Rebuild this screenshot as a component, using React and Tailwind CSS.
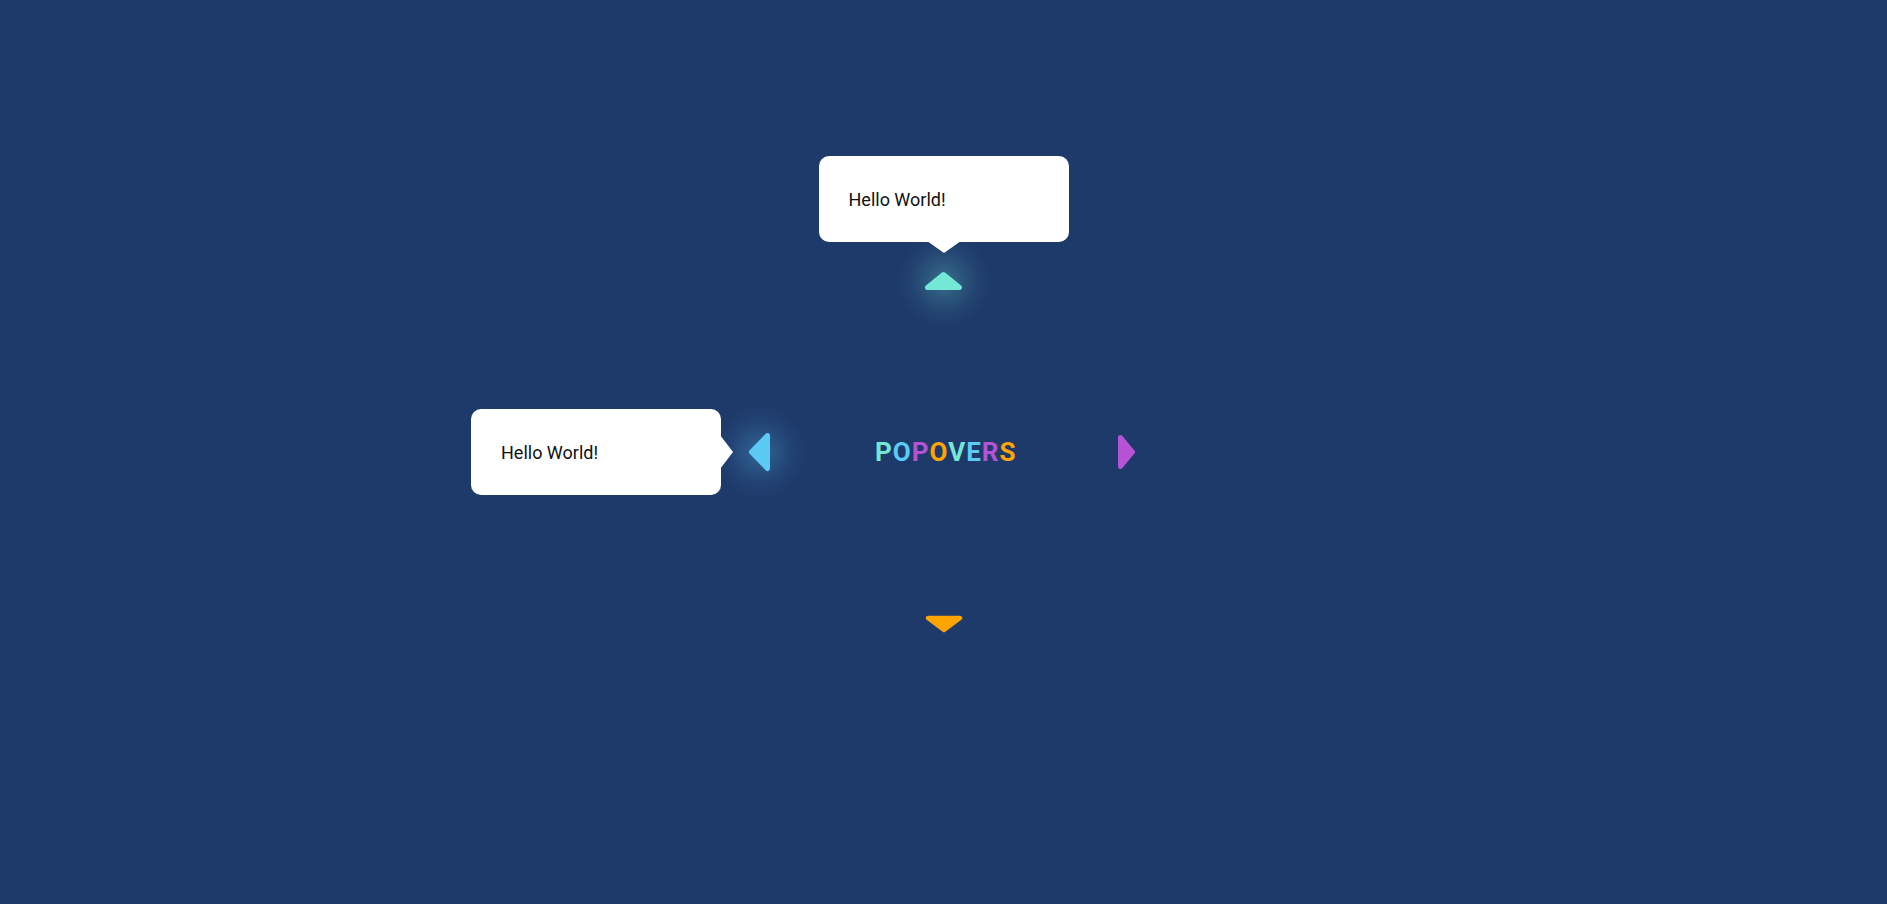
import React from 'react';

const font = { fontFamily: 'Roboto, "Liberation Sans", sans-serif' };

const letters = [
    ['P', 'text-[#74e8d4]'],
    ['O', 'text-[#5ccbf4]'],
    ['P', 'text-[#b553d4]'],
    ['O', 'text-[#ffa502]'],
    ['V', 'text-[#74e8d4]'],
    ['E', 'text-[#5ccbf4]'],
    ['R', 'text-[#b553d4]'],
    ['S', 'text-[#ffa502]'],
];

function Glow({ className }) {
    return (
        <div
            className={`pointer-events-none absolute left-1/2 top-1/2 h-[100px] w-[100px] -translate-x-1/2 -translate-y-1/2 rounded-full ${className}`}
        />
    );
}

function Popover({ side }) {
    // side = where the popover sits relative to its trigger
    if (side === 'top') {
        return (
            <div className="absolute bottom-[calc(100%+18px)] left-1/2 flex -translate-x-1/2 flex-col items-center">
                <div className="flex h-[86px] w-[250px] items-center rounded-[10px] bg-white pl-[30px] text-[18px] text-[#111]">
                    Hello World!
                </div>
                <svg width="34" height="12" viewBox="0 0 34 12" className="-mt-px">
                    <polygon points="0,0 34,0 17,12" fill="#fff" />
                </svg>
            </div>
        );
    }
    return (
        <div className="absolute right-[calc(100%+15px)] top-1/2 flex -translate-y-1/2 items-center">
            <div className="flex h-[86px] w-[250px] items-center rounded-[10px] bg-white pl-[30px] text-[18px] text-[#111]">
                Hello World!
            </div>
            <svg width="13" height="34" viewBox="0 0 13 34" className="-ml-px">
                <polygon points="0,0 13,17 0,34" fill="#fff" />
            </svg>
        </div>
    );
}

export default function App() {
    return (
        <div className="flex h-screen w-full items-center justify-center bg-[#1e3a6b]" style={font}>
            <div className="flex flex-col items-center">
                {/* Top trigger */}
                <div className="relative mb-[141px]">
                    <Glow className="bg-[radial-gradient(circle,rgba(116,232,212,0.3)_0%,rgba(116,232,212,0.16)_25%,rgba(116,232,212,0.06)_45%,rgba(116,232,212,0)_65%)]" />
                    <svg width="41" height="20" viewBox="0 0 41 20" className="relative block">
                        <polygon
                            points="4.5,16.5 20.5,3.5 36.5,16.5"
                            fill="#74e8d4"
                            stroke="#74e8d4"
                            strokeWidth="5"
                            strokeLinejoin="round"
                        />
                    </svg>
                    <Popover side="top" />
                </div>

                <div className="mb-[143px] mr-[3px] flex items-center">
                    {/* Left trigger */}
                    <div className="relative mr-[104px]">
                        <Glow className="bg-[radial-gradient(circle,rgba(92,203,244,0.3)_0%,rgba(92,203,244,0.16)_25%,rgba(92,203,244,0.06)_45%,rgba(92,203,244,0)_65%)]" />
                        <svg width="23" height="40" viewBox="0 0 23 40" className="relative block">
                            <polygon
                                points="19.5,3.5 3.5,20 19.5,36.5"
                                fill="#5ccbf4"
                                stroke="#5ccbf4"
                                strokeWidth="5"
                                strokeLinejoin="round"
                            />
                        </svg>
                        <Popover side="left" />
                    </div>

                    <h1 className="w-[140px] text-center text-[26px] font-bold leading-none tracking-[1px]">
                        {letters.map(([ch, color], i) => (
                            <span key={i} className={color}>
                                {ch}
                            </span>
                        ))}
                    </h1>

                    {/* Right trigger */}
                    <svg width="19" height="36" viewBox="0 0 19 36" className="ml-[102px] block">
                        <polygon
                            points="3.5,3.5 15.5,18 3.5,32.5"
                            fill="#b553d4"
                            stroke="#b553d4"
                            strokeWidth="5"
                            strokeLinejoin="round"
                        />
                    </svg>
                </div>

                {/* Bottom trigger */}
                <svg width="38" height="18" viewBox="0 0 38 18" className="block">
                    <polygon
                        points="3,3 19,15 35,3"
                        fill="#ffa502"
                        stroke="#ffa502"
                        strokeWidth="4.5"
                        strokeLinejoin="round"
                    />
                </svg>
            </div>
        </div>
    );
}
